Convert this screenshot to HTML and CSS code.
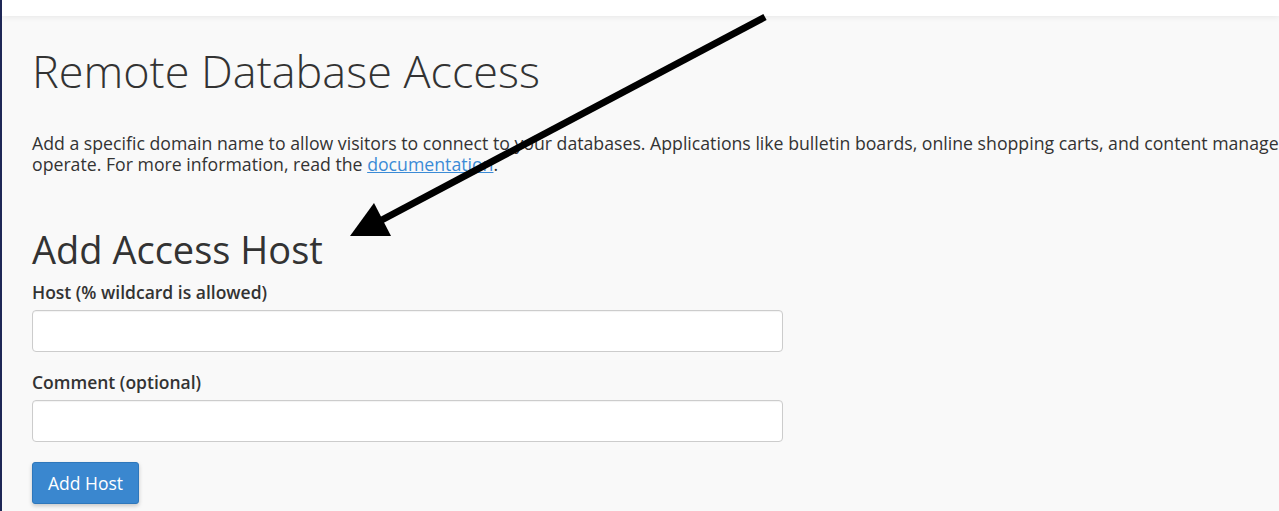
FILE: index.html
```html
<!DOCTYPE html>
<html lang="en">
<head>
<meta charset="utf-8">
<title>Remote Database Access</title>
<link rel="stylesheet" href="styles.css">
</head>
<body>
<header class="topbar"></header>
<main class="content">
  <h1 class="page-title">Remote Database Access</h1>
  <p class="description">Add a specific domain name to allow visitors to connect to your databases. Applications like bulletin boards, online shopping carts, and content management systems use databases to operate. For more information, read the <a href="#" class="doc-link">documentation</a>.</p>
  <section class="add-host">
    <h2 class="section-title">Add Access Host</h2>
    <form class="host-form">
      <div class="field">
        <label class="field-label" for="host">Host (% wildcard is allowed)</label>
        <input class="field-input" id="host" type="text">
      </div>
      <div class="field">
        <label class="field-label" for="comment">Comment (optional)</label>
        <input class="field-input" id="comment" type="text">
      </div>
      <button class="btn-primary" type="button">Add Host</button>
    </form>
  </section>
</main>
<svg class="annotation-arrow" width="1279" height="511" viewBox="0 0 1279 511" aria-hidden="true">
  <line x1="765" y1="17" x2="378" y2="222" stroke="#000" stroke-width="7"/>
  <polygon points="350,236 374,203 391,236" fill="#000"/>
</svg>
</body>
</html>
```
FILE: styles.css
```css
html, body {
  margin: 0;
  padding: 0;
}
body {
  background: #f9f9f9;
  border-left: 2px solid #1e2756;
  min-height: 511px;
  box-sizing: border-box;
  overflow: hidden;
  font-family: "Open Sans", "Liberation Sans", sans-serif;
  color: #333;
  position: relative;
}
.topbar {
  height: 16px;
  background: #fff;
  box-shadow: 0 1px 6px rgba(0, 0, 0, 0.08);
  position: relative;
  z-index: 1;
}
.content {
  padding-left: 30px;
  width: 1530px;
}
.page-title {
  font-weight: 300;
  font-size: 45px;
  line-height: 1.1;
  margin: 30px 0 0;
  color: #333;
}
.description {
  font-size: 17.7px;
  line-height: 21px;
  margin: 37px 0 0;
}
.doc-link {
  color: #3b8bd6;
  text-decoration: underline;
}
.section-title {
  font-weight: 400;
  font-size: 38px;
  line-height: 1.1;
  margin: 54px 0 4px;
  color: #333;
}
.host-form {
  display: flex;
  flex-direction: column;
  align-items: flex-start;
}
.field {
  display: flex;
  flex-direction: column;
  margin-top: 6px;
  margin-bottom: 12px;
}
.field-label {
  font-weight: 600;
  font-size: 17.5px;
  line-height: 24px;
  margin-bottom: 6px;
}
.field-input {
  width: 751px;
  height: 42px;
  box-sizing: border-box;
  border: 1px solid #ccc;
  border-radius: 4px;
  background: #fff;
  box-shadow: inset 0 1px 1px rgba(0, 0, 0, 0.05);
}
.btn-primary {
  margin-top: 8px;
  width: 107px;
  height: 42px;
  background: #3a87cf;
  border: 1px solid #2e77bb;
  border-radius: 3px;
  color: #fff;
  font-family: "Open Sans", "Liberation Sans", sans-serif;
  font-size: 17.5px;
  box-shadow: 0 2px 4px rgba(0, 0, 0, 0.2);
}
.annotation-arrow {
  position: absolute;
  top: 0;
  left: -2px;
  z-index: 2;
}
```
